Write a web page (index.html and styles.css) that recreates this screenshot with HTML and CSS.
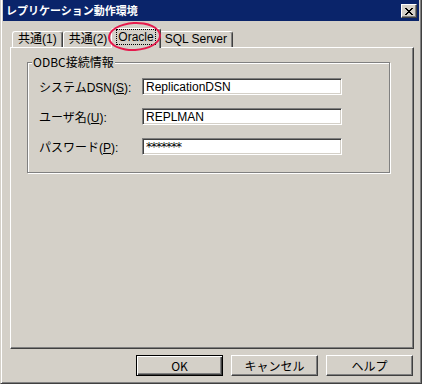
FILE: index.html
```html
<!DOCTYPE html>
<html lang="ja">
<head>
    <meta charset="UTF-8">
    <title>レプリケーション動作環境</title>
    <link rel="stylesheet" href="styles.css">
</head>
<body>
    <div class="window">
        <div class="titlebar">
            <span class="title">レプリケーション動作環境</span>
            <button class="close-btn" type="button" aria-label="閉じる">
                <svg width="8" height="7" viewBox="0 0 8 7">
                    <path d="M0 0 L7 7 M1 0 L8 7 M7 0 L0 7 M8 0 L1 7" stroke="#000" stroke-width="1" fill="none"/>
                </svg>
            </button>
        </div>

        <div class="content">
            <div class="tabs">
                <div class="tab">共通(1)</div>
                <div class="tab">共通(2)</div>
                <div class="tab active">
                    <span class="focus">Oracle</span>
                    <span class="circle"></span>
                </div>
                <div class="tab">SQL Server</div>
            </div>

            <div class="panel">
                <fieldset class="group">
                    <legend>ODBC接続情報</legend>
                    <div class="row">
                        <label for="dsn">システムDSN(<u>S</u>):</label>
                        <input type="text" id="dsn" value="ReplicationDSN">
                    </div>
                    <div class="row">
                        <label for="user">ユーザ名(<u>U</u>):</label>
                        <input type="text" id="user" value="REPLMAN">
                    </div>
                    <div class="row">
                        <label for="pass">パスワード(<u>P</u>):</label>
                        <input type="text" id="pass" class="pass" value="*******">
                    </div>
                </fieldset>
            </div>

            <div class="buttons">
                <button class="btn default" type="button">OK</button>
                <button class="btn" type="button">キャンセル</button>
                <button class="btn" type="button">ヘルプ</button>
            </div>
        </div>
    </div>
</body>
</html>
```

FILE: styles.css
```css
* {
    margin: 0;
    padding: 0;
    box-sizing: border-box;
}

body {
    background: #d4d0c8;
    font-family: "Liberation Sans", "Noto Sans CJK JP", sans-serif;
    font-size: 12px;
    color: #000;
}

.window {
    width: 422px;
    height: 384px;
    display: flex;
    flex-direction: column;
    background: #d4d0c8;
    border: 1px solid;
    border-top: 0;
    border-color: #d4d0c8 #404040 #404040 #d4d0c8;
    box-shadow: inset 1px 0 0 #fff, inset -1px -1px 0 #808080;
    padding: 0 2px 2px 2px;
}

.titlebar {
    height: 21px;
    background: #0a246a;
    display: flex;
    align-items: center;
    justify-content: space-between;
    padding: 0 2px 0 3px;
}

.title {
    color: #fff;
    font-weight: bold;
    font-size: 11px;
    font-family: "Noto Sans CJK JP", sans-serif;
    line-height: 21px;
}

.close-btn {
    width: 16px;
    height: 14px;
    margin-top: 1px;
    background: #d4d0c8;
    border: 1px solid;
    border-color: #fff #404040 #404040 #fff;
    box-shadow: inset -1px -1px 0 #808080;
    display: flex;
    align-items: center;
    justify-content: center;
}

.content {
    flex: 1;
    display: flex;
    flex-direction: column;
    padding: 0 5px 0 7px;
}

.tabs {
    display: flex;
    align-items: flex-end;
    height: 26px;
    padding: 0 2px;
}

.tab {
    height: 16px;
    padding: 0 5px;
    line-height: 15px;
    white-space: nowrap;
    background: #d4d0c8;
    border-top: 1px solid #fff;
    border-left: 1px solid #fff;
    border-right: 1px solid #404040;
    border-radius: 3px 3px 0 0;
    box-shadow: inset -1px 0 0 #808080;
}

.tab.active {
    position: relative;
    z-index: 1;
    height: 20px;
    margin: 0 -2px -1px;
    padding: 0 5px;
    line-height: 17px;
}

.focus {
    outline: 1px dotted #000;
    padding: 0 1px;
}

.circle {
    position: absolute;
    top: -7px;
    left: -4px;
    right: -2px;
    bottom: -3px;
    border: 2px solid #e5194c;
    border-radius: 50%;
    transform: rotate(-3deg);
}

.panel {
    flex: 1;
    border: 1px solid;
    border-color: #fff #404040 #404040 #fff;
    box-shadow: inset -1px -1px 0 #808080;
}

.group {
    margin: 7px 23px 0 16px;
    border: 1px solid #808080;
    box-shadow: 1px 1px 0 #fff, inset 1px 1px 0 #fff;
    padding: 9px 11px 17px;
    display: flex;
    flex-direction: column;
    gap: 13px;
}

.group legend {
    margin-left: -7px;
    padding: 0 1px;
    background: #d4d0c8;
    line-height: 14px;
    font-family: "Noto Sans CJK JP", sans-serif;
}

.row {
    display: flex;
    align-items: center;
    height: 17px;
}

.row label {
    width: 103px;
    white-space: nowrap;
}

.row input {
    width: 200px;
    height: 17px;
    padding: 0 3px;
    font: inherit;
    background: #fff;
    border: 1px solid;
    border-color: #808080 #fff #fff #808080;
    box-shadow: inset 1px 1px 0 #404040, inset -1px -1px 0 #d4d0c8;
    outline: none;
}

.row input.pass {
    font-family: "DejaVu Sans", sans-serif;
    font-size: 12px;
    letter-spacing: -1px;
}

.buttons {
    display: flex;
    justify-content: flex-end;
    gap: 8px;
    margin: 6px 0 5px;
    padding-right: 1px;
}

.btn {
    width: 87px;
    height: 21px;
    font: inherit;
    font-family: "Noto Sans CJK JP", sans-serif;
    background: #d4d0c8;
    border: 1px solid;
    border-color: #fff #404040 #404040 #fff;
    box-shadow: inset -1px -1px 0 #808080;
}

.btn.default {
    border: 1px solid #000;
    box-shadow: inset 1px 1px 0 #fff, inset -1px -1px 0 #404040, inset -2px -2px 0 #808080;
}
```
